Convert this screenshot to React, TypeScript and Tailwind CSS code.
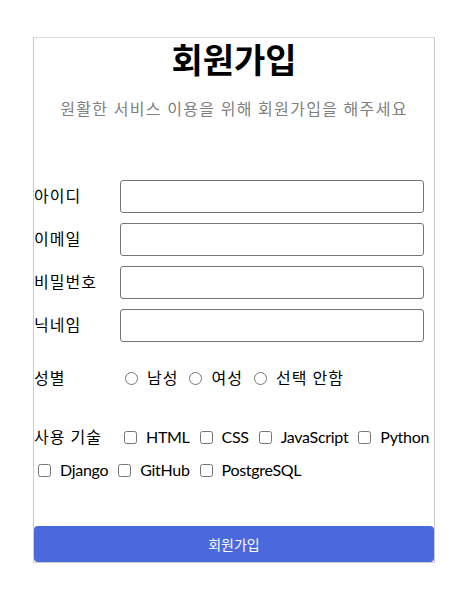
import React from "react";

const font = { fontFamily: 'Lato, "Noto Sans CJK KR", "Noto Sans", sans-serif' };

export default function App() {
  const rows = ["아이디", "이메일", "비밀번호", "닉네임"];
  const skills = ["HTML", "CSS", "JavaScript", "Python", "Django", "GitHub", "PostgreSQL"];
  return (
    <div className="w-[475px] h-[593px] bg-white pt-[37px]" style={font}>
      <div className="ml-[33px] w-[402px] border border-[#cccccc] border-t-[#dddddd] flex flex-col">
        <h1 className="text-[34px] leading-[44px] font-bold text-black text-center">회원가입</h1>
        <p className="mt-[15px] text-[16px] leading-[24px] tracking-[1.3px] text-[#808080] text-center">
          원활한 서비스 이용을 위해 회원가입을 해주세요
        </p>
        <div className="mt-[59px] flex flex-col gap-[10px]">
          {rows.map((r) => (
            <div key={r} className="flex items-center">
              <label className="w-[86px] text-[16px] leading-[24px] tracking-[1px] text-black -mt-[2px]">{r}</label>
              <input
                type="text"
                className="w-[304px] h-[33px] border border-[#767676] rounded-[3px] bg-white"
              />
            </div>
          ))}
        </div>
        <div className="mt-[24px] flex items-center h-[24px] text-[16px] text-black">
          <span className="w-[86px] tracking-[1px]">성별</span>
          {["남성", "여성", "선택 안함"].map((g) => (
            <label key={g} className="flex items-center ml-[5px] mr-[6px] tracking-[1px]">
              <input type="radio" name="gender" className="m-0 w-[13px] h-[13px] mr-[9px]" />
              {g}
            </label>
          ))}
        </div>
        <div className="mt-[35px] -mr-[8px] flex flex-wrap items-center gap-y-[9px] text-[16px] text-black">
          <span className="w-[86px] h-[24px] leading-[24px] tracking-[1px]">사용 기술</span>
          {skills.map((s) => (
            <label key={s} className="flex items-center h-[24px] ml-[4px] mr-[6px] tracking-[-0.3px]">
              <input type="checkbox" className="m-0 w-[13px] h-[13px] mr-[9px]" />
              {s}
            </label>
          ))}
        </div>
        <button className="mt-[44px] h-[36px] w-full rounded-[4px] bg-[#4a69dc] text-white text-[14px]">
          회원가입
        </button>
      </div>
    </div>
  );
}
